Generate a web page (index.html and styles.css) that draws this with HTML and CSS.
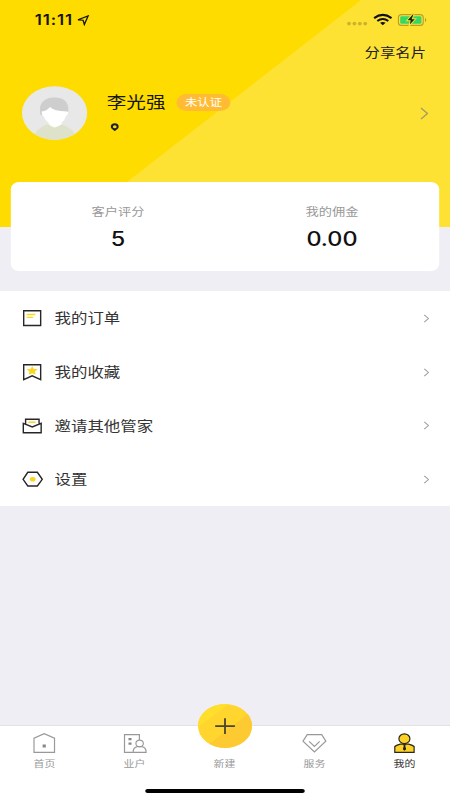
FILE: index.html
```html
<!DOCTYPE html>
<html lang="zh-CN">
<head>
<meta charset="utf-8">
<title>我的</title>
<link rel="stylesheet" href="styles.css">
</head>
<body>
<div class="phone">
  <header class="hero">
    <div class="status">
      <span class="time">11:11</span>
      <svg class="loc" viewBox="0 0 14 12" preserveAspectRatio="none"><path d="M1.3 5.2 12 1 8 10.400 6.700 5.700Z" fill="none" stroke="#16160a" stroke-width="1.400"/></svg>
      <svg class="signals" viewBox="0 0 80 14" preserveAspectRatio="none">
        <g fill="#cdb32b"><circle cx="2.200" cy="10.600" r="1.900"/><circle cx="7.600" cy="10.600" r="1.900"/><circle cx="13" cy="10.600" r="1.900"/><circle cx="18.400" cy="10.600" r="1.900"/></g>
        <g fill="none" stroke="#111" stroke-width="2.100"><path d="M27.300 5.100Q36 -1.300 44.700 5.100"/><path d="M30.500 8Q36 4 41.500 8"/></g>
        <path d="M33.200 9.800Q36 8 38.800 9.800L36 12.200Z" fill="#111"/>
        <rect x="51.600" y="1.600" width="24.800" height="10.800" rx="3" fill="none" stroke="#b5a02c" stroke-width="1.100"/>
        <rect x="53.400" y="3.300" width="21.200" height="7.400" rx="1.300" fill="#35d867"/>
        <path d="M78.200 5v4q1.200-.6 1.200-2t-1.200-2" fill="#a99a35"/>
        <path d="M65.800.8 59.800 7.700h3.500l-1.200 5.500 6.900-7.400h-3.500l1.800-5Z" fill="#16210a" stroke="#fee233" stroke-width="1"/>
      </svg>
    </div>
    <div class="share">分享名片</div>
    <div class="profile">
      <svg class="avatar" viewBox="0 0 66 54" preserveAspectRatio="none">
        <defs><clipPath id="face"><ellipse cx="33" cy="27" rx="32.600" ry="26.800"/></clipPath></defs>
        <g clip-path="url(#face)">
          <path fill="#e8e8e8" d="M0 0h66v54H0z"/>
          <path fill="#dfe2cb" d="M11 54Q14 41 27 38h12q13 3 17 16Z"/>
          <path fill="#cecece" d="M19 29C16 17 23 11.500 33 11.500S49 17 46 29Z"/>
          <path fill="#fff" d="M20 25.500q5-.5 8.500-4.500 3 4 17 4.500 2 .5.5 3.200-1.400.5-2 2-.8 3.700-4 5.800v1.800Q37.500 40 33 41.500 28.500 40 27 38.300v-1.800q-4-2.500-4.500-5.800-2-.5-2.500-5.200Z"/>
        </g>
      </svg>
      <div class="who">
        <div class="line"><span class="name">李光强</span><span class="badge">未认证</span></div>
        <svg class="pin" viewBox="0 0 9 9" preserveAspectRatio="none"><path fill="#1c2230" fill-rule="evenodd" d="M4.500.3C7 .3 8.700 1.700 8.700 3.900S6 7 4.500 8.700C3 7 .3 6.100.3 3.900S2 .3 4.500.3ZM4.500 2.300a1.900 1.600 0 1 0 0 3.200 1.900 1.600 0 1 0 0-3.200Z"/></svg>
      </div>
      <svg class="go" viewBox="0 0 9 13" preserveAspectRatio="none"><path d="M1 1 7.500 6.500 1 12" fill="none" stroke="#a29a63" stroke-width="1.300"/></svg>
    </div>
  </header>

  <section class="card">
    <div class="stat"><span class="label">客户评分</span><span class="value">5</span></div>
    <div class="stat"><span class="label">我的佣金</span><span class="value">0.00</span></div>
  </section>

  <nav class="menu">
    <a class="row">
      <svg class="icon" viewBox="0 0 22 18" preserveAspectRatio="none"><path d="M2.100 1.700h17v14.800h-17z" fill="none" stroke="#262626" stroke-width="1.400"/><path d="M5 5.500h8.800M5 8.400h6.500" stroke="#fbd51f" stroke-width="1.400"/></svg>
      <span class="text">我的订单</span>
      <svg class="arrow" viewBox="0 0 6 9" preserveAspectRatio="none"><path d="M.7.8 4.800 4.500.7 8.200" fill="none" stroke="#999" stroke-width="1"/></svg>
    </a>
    <a class="row">
      <svg class="icon" viewBox="0 0 22 18" preserveAspectRatio="none"><path d="M2.100 1.700h17v15l-8.500-3.900-8.500 3.900z" fill="none" stroke="#262626" stroke-width="1.400"/><path d="m10.600 3 1.600 2.900 3.900.4-2.700 2.300.6 3.200-3.400-1.500-3.400 1.500.6-3.200-2.700-2.300 3.900-.4z" fill="#fbd51f"/></svg>
      <span class="text">我的收藏</span>
      <svg class="arrow" viewBox="0 0 6 9" preserveAspectRatio="none"><path d="M.7.8 4.800 4.500.7 8.200" fill="none" stroke="#999" stroke-width="1"/></svg>
    </a>
    <a class="row">
      <svg class="icon" viewBox="0 0 22 18" preserveAspectRatio="none"><path d="M4 7V2.300h13.500V7M1.700 6.300 10.700 9.900l8.900-3.600v9.400H1.700z" fill="none" stroke="#262626" stroke-width="1.400"/><path d="M7 5.300h7" stroke="#fbd51f" stroke-width="1.500"/></svg>
      <span class="text">邀请其他管家</span>
      <svg class="arrow" viewBox="0 0 6 9" preserveAspectRatio="none"><path d="M.7.8 4.800 4.500.7 8.200" fill="none" stroke="#999" stroke-width="1"/></svg>
    </a>
    <a class="row">
      <svg class="icon" viewBox="0 0 22 18" preserveAspectRatio="none"><path d="M6.200 2.300h9.600l4.900 7-4.900 6.700H6.200L1.500 9.300z" fill="none" stroke="#262626" stroke-width="1.400"/><ellipse cx="11.100" cy="9.300" rx="2.800" ry="2.300" fill="#fbd51f"/></svg>
      <span class="text">设置</span>
      <svg class="arrow" viewBox="0 0 6 9" preserveAspectRatio="none"><path d="M.7.8 4.800 4.500.7 8.200" fill="none" stroke="#999" stroke-width="1"/></svg>
    </a>
  </nav>

  <footer class="tabbar">
    <div class="tabs">
      <a class="tab">
        <svg class="glyph" viewBox="0 0 26 22" preserveAspectRatio="none"><path d="M2.800 20.400V6.200L13 1.600l10.300 4.600v14.200z" fill="none" stroke="#999" stroke-width="1.200"/><path d="M11.400 12.500h3.200v3h-3.200z" fill="#888"/></svg>
        <span>首页</span>
      </a>
      <a class="tab">
        <svg class="glyph" viewBox="0 0 26 22" preserveAspectRatio="none"><g fill="none" stroke="#999" stroke-width="1.200"><path d="M12 20.400H3.300V2.700h14.900V8"/><ellipse cx="18.400" cy="11.400" rx="3.700" ry="3.300"/><path d="M11.900 20.400q0-5 4.300-5.700h4.500q4.200.7 4.200 5.700z"/></g><path d="M7.300 6h3v2.300h-3zM7.300 10.500h3v2.300h-3z" fill="#888"/></svg>
        <span>业户</span>
      </a>
      <a class="tab">
        <span class="glyph"></span>
        <span>新建</span>
        <svg class="add" viewBox="0 0 54 44" preserveAspectRatio="none">
          <defs><clipPath id="disc"><ellipse cx="27" cy="22" rx="27" ry="22"/></clipPath></defs>
          <g clip-path="url(#disc)"><path fill="#ffd52e" d="M0 0h54v44H0z"/><path fill="#ffdf2b" d="M0 0h31L0 23z"/><path fill="#fdca32" d="M54 7v37H6z"/></g>
          <path d="M27 14.300v15.800M17.200 22.200h19.700" stroke="#494434" stroke-width="1.800"/>
        </svg>
      </a>
      <a class="tab">
        <svg class="glyph" viewBox="0 0 26 22" preserveAspectRatio="none"><g fill="none" stroke="#999" stroke-width="1.200"><path d="M6 2.700h14.500l4.100 6.400L13.200 20 1.800 9.100z"/><path d="m7.900 9.400 5.300 5 5.300-5"/></g></svg>
        <span>服务</span>
      </a>
      <a class="tab active">
        <svg class="glyph" viewBox="0 0 26 22" preserveAspectRatio="none"><g fill="#fdd228" stroke="#2b2718" stroke-width="1.200"><path d="M3.600 20.300v-5.800q1-1.200 5.400-2.400h8.500q4.400 1.200 5.400 2.400v5.800z"/><ellipse cx="13.200" cy="6.700" rx="5.500" ry="4.900"/></g><path d="M12 12.200h2.600l-.5 2 .9 3-1.700 1.500-1.700-1.500.9-3z" fill="#222"/></svg>
        <span>我的</span>
      </a>
    </div>
    <div class="home"></div>
  </footer>
</div>
</body>
</html>
```

FILE: styles.css
```css
* { box-sizing: border-box; }
html, body { margin: 0; width: 450px; height: 800px; overflow: hidden; }
svg { display: block; flex: none; }

/* 375-unit wide layout shown at 450px */
.phone {
  width: 375px;
  height: 800px;
  transform: scaleX(1.2);
  transform-origin: 0 0;
  display: flex;
  flex-direction: column;
  background: #efeef4;
  color: #222;
  font-family: "Noto Sans CJK SC", sans-serif;
}

.hero {
  height: 227px;
  flex: none;
  background: #fee233;
  position: relative;
  isolation: isolate;
}
.hero::before {
  content: "";
  position: absolute;
  inset: 0;
  z-index: -1;
  background: #ffdc00;
  clip-path: polygon(0 0, 301px 0, 57.5px 100%, 0 100%);
}

.status {
  height: 40px;
  padding: 0 19px 0 29px;
  display: flex;
  align-items: center;
}
.time {
  font: 600 14px/16px Inter, sans-serif;
  letter-spacing: 0.75px;
  color: #16160a;
  width: 34px;
  white-space: nowrap;
}
.loc { width: 11px; height: 11px; margin-left: 1px; }
.signals { width: 66.7px; height: 14px; margin-left: auto; }

.share {
  height: 26px;
  padding-right: 20px;
  text-align: right;
  font-size: 12.8px;
  line-height: 24px;
}

.profile {
  height: 94px;
  padding: 0 18px;
  display: flex;
  align-items: center;
}
.avatar { width: 55px; height: 54px; }
.who { margin-left: 16px; padding-bottom: 4px; flex: 1; }
.line { display: flex; align-items: center; gap: 9.5px; height: 24px; }
.name { font-size: 16.3px; line-height: 24px; padding-bottom: 3px; color: #16160a; }
.badge {
  width: 44.5px;
  height: 17px;
  border-radius: 9px;
  background: #ffbb33;
  color: #fff;
  font-size: 10.3px;
  line-height: 16px;
  text-align: center;
}
.pin { width: 7.3px; height: 8.5px; margin: 8px 0 0 2.8px; }
.go { width: 7.5px; height: 13px; }

.card {
  position: relative;
  height: 89px;
  flex: none;
  margin: -45px 9.2px 20px;
  border-radius: 7px;
  background: #fff;
  display: grid;
  grid-template-columns: 1fr 1fr;
}
.stat { display: flex; flex-direction: column; align-items: center; padding-top: 19px; }
.label { font-size: 11px; line-height: 20px; color: #999; }
.value { font: 500 19.5px/24px Inter, sans-serif; color: #111; margin-top: 6px; }

.menu { background: #fff; flex: none; height: 215px; }
.row {
  height: 53.7px;
  padding: 1px 17.5px 0 18px;
  display: flex;
  align-items: center;
  font-size: 13.7px;
  color: #333;
}
.text { line-height: 20px; padding-bottom: 2px; }
.icon { width: 18.3px; height: 18px; margin-right: 9.2px; }
.arrow { width: 5px; height: 9px; margin-left: auto; }

.tabbar {
  margin-top: auto;
  height: 75px;
  border-top: 1px solid #e2e2e2;
  background: #fff;
}
.tabs { display: grid; grid-template-columns: repeat(5, 1fr); height: 63px; }
.tab {
  position: relative;
  display: flex;
  flex-direction: column;
  align-items: center;
  padding: 6px 1px 0 0;
  font-size: 9.1px;
  line-height: 14px;
  color: #999;
}
.glyph { width: 21.7px; height: 22px; margin-bottom: 2px; }
.active { color: #333; }
.add { position: absolute; left: 15px; top: -22px; width: 45px; height: 44px; }
.home { width: 133.3px; height: 4px; border-radius: 2px; background: #000; margin: 0 auto; }
```
